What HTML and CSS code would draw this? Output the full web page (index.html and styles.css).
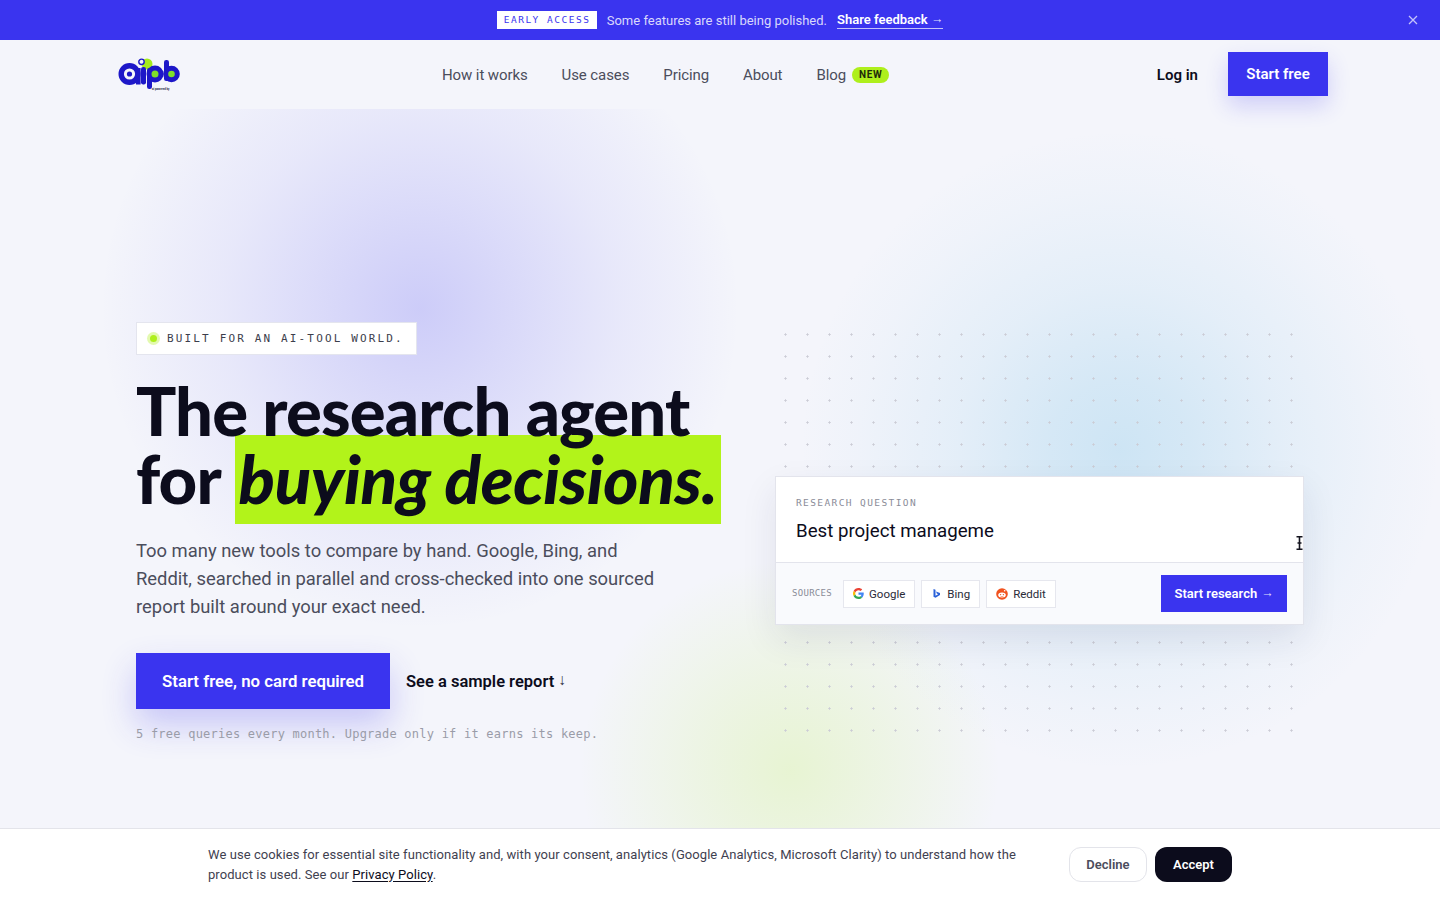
FILE: index.html
```html
<!DOCTYPE html>
<html lang="en">
<head>
<meta charset="utf-8">
<title>aipb</title>
<link rel="stylesheet" href="styles.css">
</head>
<body>
<div class="banner">
  <span class="chip">EARLY ACCESS</span>
  <span class="banner-text">Some features are still being polished.</span>
  <a class="banner-link" href="#">Share feedback <span class="arr">→</span></a>
  <button class="banner-close" aria-label="Close"><svg width="10" height="10" viewBox="0 0 10 10"><path d="M1 1l8 8M9 1l-8 8" stroke="currentColor" stroke-width="1.3" fill="none"/></svg></button>
</div>
<header class="nav">
  <a class="logo" href="#">
    <svg width="62" height="34" viewBox="0 0 62 34">
      <circle cx="29" cy="6" r="5.500" fill="#a6ec1c"/>
      <circle cx="23.500" cy="3.800" r="2.700" fill="#f4f5fb" stroke="#1d17c8" stroke-width="1.400"/>
      <circle cx="11.500" cy="16" r="8.300" fill="#f4f5fb" stroke="#1d17c8" stroke-width="5.400"/>
      <circle cx="11.500" cy="16" r="2.600" fill="#1d17c8"/>
      <rect x="18" y="10" width="4.600" height="16.500" fill="#1d17c8"/>
      <rect x="23" y="9" width="5" height="17.500" rx="2.200" fill="#1d17c8"/>
      <rect x="29" y="10" width="5" height="21" rx="2.200" fill="#1d17c8"/>
      <circle cx="37" cy="16" r="6" fill="#7fe02a" stroke="#1d17c8" stroke-width="5"/>
      <rect x="46" y="2" width="5" height="21" rx="2.200" fill="#1d17c8"/>
      <circle cx="53.500" cy="16" r="5.800" fill="#7fe02a" stroke="#1d17c8" stroke-width="5"/>
      <text class="logo-tag" x="34" y="31.500">ai powered by</text>
    </svg>
  </a>
  <nav class="nav-links">
    <a href="#">How it works</a>
    <a href="#">Use cases</a>
    <a href="#">Pricing</a>
    <a href="#">About</a>
    <a class="blog" href="#">Blog <span class="new">NEW</span></a>
  </nav>
  <div class="nav-right">
    <a class="login" href="#">Log in</a>
    <a class="btn nav-btn" href="#">Start free</a>
  </div>
</header>
<main class="hero">
  <div class="blob blob-purple"></div>
  <div class="blob blob-blue"></div>
  <div class="blob blob-green"></div>
  <section class="hero-left">
    <div class="pill"><span class="pill-dot"></span>BUILT FOR AN AI-TOOL WORLD.</div>
    <h1>The research agent<br>for <em>buying decisions.</em></h1>
    <p class="lead">Too many new tools to compare by hand. Google, Bing, and<br>Reddit, searched in parallel and cross-checked into one sourced<br>report built around your exact need.</p>
    <div class="cta-row">
      <a class="btn cta" href="#">Start free, no card required</a>
      <a class="sample" href="#">See a sample report <span class="arr">↓</span></a>
    </div>
    <p class="fine">5 free queries every month. Upgrade only if it earns its keep.</p>
  </section>
  <section class="stage">
    <div class="card">
      <div class="card-top">
        <div class="card-label">RESEARCH QUESTION</div>
        <div class="card-input">Best project manageme</div>
        <svg class="ibeam" width="7" height="14" viewBox="0 0 7 14"><path d="M0.5 0.8h6M0.5 13.2h6M3.5 1v12M1.5 7h4" stroke="#14141f" stroke-width="1.6" fill="none"/></svg>
      </div>
      <div class="card-foot">
        <span class="sources">SOURCES</span>
        <span class="src">
          <svg width="11" height="11" viewBox="0 0 48 48"><path fill="#EA4335" d="M24 9.5c3.5 0 6.7 1.2 9.2 3.600l6.900-6.900C35.900 2.400 30.400 0 24 0 14.600 0 6.500 5.400 2.600 13.200l8 6.200C12.500 13.700 17.800 9.500 24 9.500z"/><path fill="#4285F4" d="M46.900 24.500c0-1.600-.2-3.100-.4-4.500H24v9h12.900c-.6 3-2.200 5.500-4.700 7.200l7.700 6c4.500-4.200 7-10.300 7-17.700z"/><path fill="#FBBC05" d="M10.500 28.600c-.5-1.400-.8-3-.8-4.600s.3-3.200.8-4.600l-8-6.200C.9 16.500 0 20.100 0 24s.9 7.500 2.600 10.800l7.900-6.200z"/><path fill="#34A853" d="M24 48c6.500 0 11.900-2.100 15.900-5.800l-7.700-6c-2.100 1.400-4.900 2.300-8.200 2.300-6.200 0-11.500-4.200-13.400-9.900l-8 6.200C6.500 42.600 14.600 48 24 48z"/></svg>
          Google
        </span>
        <span class="src">
          <svg width="11" height="11" viewBox="0 0 11 11"><path d="M2.500 1l2 .7v6l2.600-1.500-1.300-.6-.8-2 4 1.400v2.100L4.500 9.800l-2-1.100z" fill="#2b62d9"/></svg>
          Bing
        </span>
        <span class="src">
          <svg width="12" height="12" viewBox="0 0 12 12"><circle cx="6" cy="6" r="5.800" fill="#f1531f"/><ellipse cx="6" cy="7" rx="3.800" ry="2.500" fill="#fff"/><circle cx="4.600" cy="6.600" r=".7" fill="#f1531f"/><circle cx="7.400" cy="6.600" r=".7" fill="#f1531f"/><path d="M4.500 8.200q1.500.9 3 0" stroke="#f1531f" stroke-width=".5" fill="none"/><circle cx="8.700" cy="2.700" r=".8" fill="#fff"/></svg>
          Reddit
        </span>
        <a class="btn research" href="#">Start research <span class="arr">→</span></a>
      </div>
    </div>
  </section>
</main>
<div class="cookie">
  <div class="cookie-inner">
    <p>We use cookies for essential site functionality and, with your consent, analytics (Google Analytics, Microsoft Clarity) to understand how the<br>product is used. See our <a href="#">Privacy Policy</a>.</p>
    <div class="cookie-btns">
      <button class="decline">Decline</button>
      <button class="accept">Accept</button>
    </div>
  </div>
</div>
</body>
</html>
```
FILE: styles.css
```css
* { box-sizing: border-box; }
html, body { margin: 0; height: 100%; overflow: hidden; }
body { background: #f4f5fb; font-family: "Roboto", "Inter", sans-serif; color: #0c0c1c; }
a { color: inherit; text-decoration: none; }
button { font-family: inherit; }
.arr { font-family: "Liberation Sans", sans-serif; font-weight: 400; font-size: .95em; line-height: 1; vertical-align: .08em; opacity: .85; }

.banner { height: 40px; background: #3a34ef; display: flex; align-items: center; justify-content: center; gap: 10px; position: relative; font-size: 13px; color: rgba(255,255,255,.82); }
.chip { background: #fff; color: #3a34ef; font: 9.5px/18px "DejaVu Sans Mono", monospace; letter-spacing: 1.5px; padding: 0 6px 0 7px; height: 18px; width: 100px; white-space: nowrap; }
.banner-link { color: #fff; font-weight: 600; border-bottom: 1px solid rgba(255,255,255,.7); line-height: 16px; }
.banner-close { position: absolute; right: 22px; top: 15px; padding: 0; width: 10px; height: 10px; display: flex; background: none; border: 0; color: rgba(255,255,255,.7); }

.nav { height: 69px; background: #f4f5fb; padding: 0 112px 0 118px; display: grid; grid-template-columns: 324px auto 1fr; align-items: center; position: relative; z-index: 2; }
.logo { display: flex; width: 62px; height: 34px; margin-top: 1px; }
.logo-tag { font: 700 2.8px "Roboto", sans-serif; fill: #2d2d4a; }
.nav-links { display: flex; gap: 34px; font-size: 15px; letter-spacing: -.1px; color: #4b4d5c; align-items: center; }
.blog { display: flex; align-items: center; gap: 6px; }
.new { background: #aeef1c; color: #1e2a0a; font-size: 10px; font-weight: 700; letter-spacing: .6px; height: 16px; line-height: 16px; padding: 0 7px; border-radius: 8px; }
.nav-right { display: flex; align-items: center; justify-content: flex-end; gap: 30px; }
.login { font-weight: 600; font-size: 15px; }
.btn { background: #3a34ef; color: #fff; display: flex; align-items: center; justify-content: center; gap: 4px; font-weight: 600; }
.nav-btn { width: 100px; height: 44px; font-size: 15px; margin-bottom: 1px; box-shadow: 0 10px 22px rgba(58,52,239,.2); }

.hero { position: relative; height: 791px; padding: 213px 136px 0; display: grid; grid-template-columns: 583px 529px; column-gap: 56px; align-items: start; overflow: hidden; }
.blob { position: absolute; border-radius: 50%; }
.blob-purple { left: 100px; top: -120px; width: 640px; height: 640px; background: radial-gradient(circle closest-side, rgba(58,52,239,.21) 0%, rgba(58,52,239,.14) 30%, rgba(58,52,239,.065) 62%, rgba(58,52,239,0) 100%); }
.blob-blue { left: 800px; top: 21px; width: 640px; height: 640px; background: radial-gradient(circle closest-side, rgba(90,180,225,.25) 0%, rgba(90,180,225,.2) 22%, rgba(90,180,225,.1) 52%, rgba(90,180,225,.03) 82%, rgba(90,180,225,0) 100%); }
.blob-green { left: 580px; top: 451px; width: 420px; height: 420px; background: radial-gradient(circle closest-side, rgba(174,239,28,.18) 0%, rgba(174,239,28,.1) 45%, rgba(174,239,28,0) 100%); }

.hero-left { position: relative; }
.pill { display: inline-flex; align-items: center; height: 33px; width: 281px; background: #fff; border: 1px solid #e4e5ee; padding-left: 13px; font: 11px "DejaVu Sans Mono", monospace; letter-spacing: 2.15px; color: #3c3e4c; }
.pill-dot { width: 7px; height: 7px; border-radius: 50%; background: #aeef1c; box-shadow: 0 0 0 3px rgba(174,239,28,.35); margin-right: 10px; flex: none; }
h1 { position: relative; z-index: 0; margin: 21px 0 0; font-family: "Lato", sans-serif; font-size: 67px; line-height: 68px; font-weight: 900; letter-spacing: -.85px; color: #0c0c1c; white-space: nowrap; }
h1 em { position: relative; z-index: -1; font-style: italic; background: #b2f31a; padding: 3px 4px 6px; letter-spacing: -.3px; }
.lead { margin: 25px 0 0; font-size: 18.4px; line-height: 28px; color: #4b4d5c; white-space: nowrap; }
.cta-row { display: flex; align-items: center; gap: 16px; margin-top: 32px; }
.cta { width: 254px; height: 56px; font-size: 16.8px; box-shadow: 0 16px 34px rgba(58,52,239,.24); }
.sample { font-size: 16.5px; font-weight: 600; }
.fine { margin: 17px 0 0; font: 12px/16px "DejaVu Sans Mono", monospace; letter-spacing: .23px; color: #9a9ca8; white-space: nowrap; }

.stage { position: relative; height: 420px; display: flex; align-items: center; padding-top: 37px; background-image: radial-gradient(circle at 10.5px 12.5px, #cbccd5 .9px, transparent 1.3px); background-size: 22px 22px; }
.card { width: 100%; background: #fff; border: 1px solid #e3e4ec; box-shadow: 0 14px 34px rgba(30,34,80,.09); }
.card-top { height: 86px; padding: 20px 20px 0; position: relative; border-bottom: 1px solid #e3e4ec; }
.card-label { font: 9.5px/12px "DejaVu Sans Mono", monospace; letter-spacing: 1.4px; color: #8a8c98; }
.card-input { margin-top: 9px; font-size: 18.7px; line-height: 26px; color: #0c0c1c; }
.ibeam { position: absolute; right: 0; top: 59px; }
.card-foot { height: 61px; background: #f9fafd; padding: 0 16px; display: flex; align-items: center; }
.sources { font: 9px "DejaVu Sans Mono", monospace; letter-spacing: .3px; color: #8a8c98; margin: -1px 11px 0 0; }
.src { height: 28px; padding: 0 9px; margin-right: 6px; background: #fff; border: 1px solid #e6e7ee; display: flex; align-items: center; gap: 5px; font-size: 11.5px; color: #2a2b38; }
.research { margin-left: auto; width: 126px; height: 37px; font-size: 13px; }

.cookie { position: fixed; left: 0; right: 0; bottom: 0; height: 72px; background: #fff; border-top: 1px solid #e3e4ea; z-index: 3; }
.cookie-inner { width: 1024px; height: 100%; margin: 0 auto; display: flex; align-items: center; justify-content: space-between; }
.cookie p { margin: 0; width: 830px; font-size: 13px; letter-spacing: .07px; line-height: 20px; color: #3f4150; white-space: nowrap; }
.cookie p a { color: #0c0c1c; text-decoration: underline; text-underline-offset: 2px; }
.cookie-btns { display: flex; gap: 8px; }
.cookie-btns button { height: 35px; border-radius: 12px; font-size: 13px; font-weight: 600; width: 78px; padding: 0; }
.decline { background: #fff; border: 1px solid #e3e4ea; color: #4b4d5c; }
.accept { background: #0c0c1c; border: 0; color: #fff; width: 77px !important; }
```
